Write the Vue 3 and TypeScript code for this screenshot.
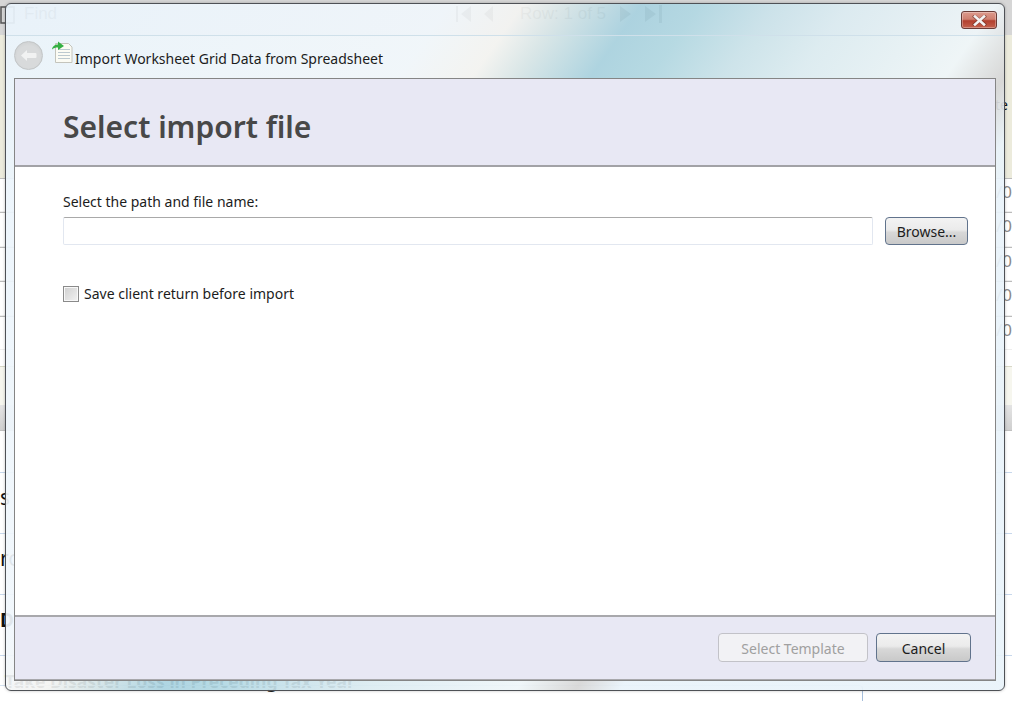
<script setup lang="ts">
const rows: string[] = ['/0', '/0', '/0', '/0', '/0']
const lowerRows: { text: string; strong: boolean }[] = [
  { text: 's', strong: false },
  { text: 'ro', strong: false },
  { text: 'D', strong: true },
]
</script>

<template>
  <div class="page">
    <div class="backdrop">
      <div class="bg-toolbar">
        <svg class="bg-tool-icon" width="16" height="20" viewBox="0 0 16 20"><rect x="1" y="3" width="13" height="16" fill="none" stroke="#555" stroke-width="1.5" /></svg>
        <span class="bg-find">Find</span>
        <svg class="bg-nav" width="46" height="20" viewBox="0 0 46 20" fill="#666">
          <rect x="1" y="2" width="2" height="16" />
          <path d="M16 2v16l-10-8zM38 2v16l-9-8z" />
        </svg>
        <span class="bg-row-count">Row: 1 of 5</span>
        <svg class="bg-nav-next" width="46" height="20" viewBox="0 0 46 20" fill="#555">
          <path d="M1 2v16l11-8zM26 2v16l11-8z" />
          <rect x="40" y="1" width="3" height="18" />
        </svg>
      </div>
      <div class="bg-banner"><span>te</span></div>
      <div class="bg-rows">
        <div v-for="(row, i) in rows" :key="i" class="bg-row">{{ row }}</div>
      </div>
      <div class="bg-summary"></div>
      <div class="bg-head"></div>
      <div class="bg-list">
        <div v-for="row in lowerRows" :key="row.text" class="bg-list-row" :class="{ strong: row.strong }">{{ row.text }}</div>
      </div>
      <div class="bg-section">
        <span class="bg-section-text">Take Disaster Loss in Preceding Tax Year</span>
      </div>
    </div>

    <section class="window">
      <div class="title-bar">
        <button class="close" type="button" aria-label="Close">
          <svg width="15" height="11" viewBox="0 0 15 11">
            <path d="M2.500 1.500L12.500 9.500M12.500 1.500L2.500 9.500" stroke="#5a2a22" stroke-width="3.6" stroke-linecap="square" opacity=".55" />
            <path d="M3 1.500L12 9.500M12 1.500L3 9.500" stroke="#f4f4f4" stroke-width="2.6" stroke-linecap="square" />
          </svg>
        </button>
      </div>
      <div class="nav-bar">
        <span class="back">
          <svg width="17" height="13" viewBox="0 0 17 13"><path d="M1 6.500L7 1v3h8.500a1 1 0 0 1 1 1v3a1 1 0 0 1-1 1H7v3z" fill="#f1f2f2" /></svg>
        </span>
        <svg class="doc-icon" width="23" height="23" viewBox="0 0 23 23">
          <path d="M4.500 3.500h13l3.500 3.500v15.500h-16.500z" fill="#fbfbf4" stroke="#c4c4bc" />
          <path d="M7 9.500h12M7 12.500h12M7 15.500h12M7 18.500h12" stroke="#bcc9d0" />
          <path d="M1 9.500c.5-3.500 3-5 6-5V1.500l6 4.500-6 4V7.500c-2.500 0-4.500.5-6 2z" fill="#35b043" />
        </svg>
        <span class="window-title">Import Worksheet Grid Data from Spreadsheet</span>
      </div>
      <div class="panel">
        <header class="panel-head">
          <h1>Select import file</h1>
        </header>
        <main class="panel-body">
          <label class="path-label" for="path">Select the path and file name:</label>
          <div class="path-row">
            <input id="path" class="path-input" type="text" />
            <button class="btn browse" type="button">Browse...</button>
          </div>
          <label class="save-row">
            <span class="check"></span>
            <span>Save client return before import</span>
          </label>
        </main>
        <footer class="panel-foot">
          <button class="btn template" type="button" disabled>Select Template</button>
          <button class="btn cancel" type="button">Cancel</button>
        </footer>
      </div>
    </section>
  </div>
</template>

<style>
html, body { margin: 0; background: #fff; }
</style>

<style scoped>
.page {
  position: relative;
  width: 1012px;
  height: 701px;
  overflow: hidden;
  background: #fff;
  font-family: "Noto Sans", "Open Sans", sans-serif;
  color: #1c1c1c;
}
.backdrop {
  display: flex;
  flex-direction: column;
  height: 701px;
}
.bg-toolbar {
  display: flex;
  align-items: center;
  height: 35px;
  flex: none;
  background: #d6d6d6;
  font-family: "Liberation Sans", sans-serif;
  font-size: 17px;
  color: #666;
  padding-bottom: 8px;
  box-sizing: border-box;
}
.bg-find { margin-left: 8px; }
.bg-nav { margin-left: 398px; }
.bg-row-count { margin-left: 19px; }
.bg-nav-next { margin-left: 13px; }
.bg-banner {
  height: 143px;
  flex: none;
  background: #ecebdc;
  display: flex;
  justify-content: flex-end;
  padding: 60px 4px 0 0;
  box-sizing: border-box;
  font-size: 14px;
  line-height: 20px;
  color: #111;
}
.bg-rows { flex: none; }
.bg-row {
  height: 34.4px;
  box-sizing: border-box;
  border-top: 1px solid #bcbcbc;
  border-bottom: 1px solid #eeeeee;
  text-align: right;
  font-size: 17px;
  line-height: 26px;
  color: #8a8a8a;
}
.bg-summary {
  flex: none;
  box-sizing: border-box;
  margin-top: 16px;
  height: 39px;
  border-top: 1px solid #d8d8c8;
  background: #f6f6ee;
}
.bg-head {
  height: 25px;
  flex: none;
  background: linear-gradient(#e4e4e4, #cfcfcf);
  border-bottom: 1px solid #c0c0c0;
}
.bg-list {
  flex: none;
  padding-top: 41px;
}
.bg-list-row {
  height: 61px;
  box-sizing: border-box;
  border-top: 1px solid #c8d8ec;
  font-size: 21px;
  line-height: 49px;
  color: #111;
}
.bg-list-row.strong {
  font-weight: 700;
  font-size: 19px;
  line-height: 50px;
}
.bg-section {
  flex: 1;
  position: relative;
  box-sizing: border-box;
  border-top: 1px solid #c8d8ec;
  padding: 14px 0 0 5px;
}
.bg-section::after {
  content: "";
  position: absolute;
  left: 0;
  top: 29px;
  width: 863px;
  height: 30px;
  box-sizing: border-box;
  border-top: 1px solid #d5e2f0;
  border-right: 1px solid #a6bedb;
  border-top-right-radius: 4px;
}
.bg-section-text {
  font-size: 17.500px;
  line-height: 22px;
  font-weight: 700;
  color: #222;
  white-space: nowrap;
}
.window {
  position: absolute;
  left: 5px;
  top: 3px;
  width: 1000px;
  height: 688px;
  box-sizing: border-box;
  display: flex;
  flex-direction: column;
  border: 1px solid #4e5156;
  border-radius: 6px;
  box-shadow: 0 0 3px rgba(0, 0, 0, .25);
  background: linear-gradient(125deg,
    #eaf4fcec 0%, #f1f7fcec 30%, #f4f4f2ec 35%, #d8e6e8ec 38%, #a9d2e0ec 43%, #b2d8e3ec 47%, #cbe3ebec 52%,
    #dcecf2ec 57%, #eff6f9ec 67%, #d6d6d6ec 71%, #e9f3faec 74%, #e9f3faec 100%);
}
.title-bar {
  height: 32px;
  flex: none;
  display: flex;
  justify-content: flex-end;
  align-items: flex-start;
  padding: 7px 7px 0 0;
  box-sizing: border-box;
  border-bottom: 1px solid #cfe0ea;
}
.close {
  width: 36px;
  height: 18px;
  padding: 0;
  display: flex;
  align-items: center;
  justify-content: center;
  box-sizing: border-box;
  border: 1px solid #6a3b36;
  border-radius: 3px;
  background: linear-gradient(#dc9a8c 0%, #cf8070 45%, #b2402e 55%, #c4614d 100%);
  box-shadow: inset 0 0 0 1px rgba(255, 255, 255, .3);
}
.nav-bar {
  height: 42px;
  flex: none;
  display: flex;
  align-items: flex-start;
  padding-left: 8px;
  box-sizing: border-box;
}
.back {
  width: 29px;
  height: 29px;
  margin-top: 5px;
  border-radius: 50%;
  box-sizing: border-box;
  border: 1px solid #c2c5c6;
  background: radial-gradient(circle at 50% 55%, #d8dadb 0 55%, #c6c9ca 100%);
  display: flex;
  align-items: center;
  justify-content: center;
}
.doc-icon { margin: 4px 0 0 8px; flex: none; }
.window-title {
  margin: 13px 0 0 1px;
  font-size: 14px;
  line-height: 20px;
  white-space: nowrap;
}
.panel {
  flex: 1;
  min-height: 0;
  margin: 0 8px 9px;
  display: flex;
  flex-direction: column;
  background: #fff;
  border: 1px solid #858585;
}
.panel-head {
  height: 88px;
  flex: none;
  box-sizing: border-box;
  display: flex;
  align-items: center;
  padding: 9px 0 0 48px;
  background: #e8e8f4;
  border-bottom: 2px solid #a2a2a6;
}
h1 {
  margin: 0;
  font-size: 30px;
  line-height: 44px;
  font-weight: 600;
  color: #484848;
}
.panel-body {
  flex: 1;
  min-height: 0;
  padding: 25px 27px 0 48px;
}
.path-label {
  display: block;
  font-size: 14px;
  line-height: 20px;
}
.path-row {
  display: flex;
  gap: 12px;
  margin-top: 5px;
}
.path-input {
  flex: 1;
  min-width: 0;
  height: 28px;
  box-sizing: border-box;
  border: 1px solid #e2e7f0;
  border-top-color: #a9a9a9;
  border-radius: 2px;
  background: #fff;
}
.btn {
  height: 28px;
  padding: 0;
  box-sizing: border-box;
  border: 1px solid #61738c;
  border-radius: 4px;
  font-family: inherit;
  font-size: 14px;
  color: #1c1c1c;
  background: linear-gradient(#f3f3f3 0%, #ebebeb 45%, #d8d8d8 55%, #c9c9c9 100%);
}
.browse { width: 83px; }
.save-row {
  display: flex;
  align-items: center;
  gap: 5px;
  margin-top: 41px;
  font-size: 14px;
  line-height: 16px;
}
.check {
  width: 16px;
  height: 16px;
  flex: none;
  box-sizing: border-box;
  border: 1px solid #8a8a8a;
  background: linear-gradient(135deg, #cfcfcf, #f2f2f2);
  box-shadow: inset 0 0 0 1px #f8f8f8;
}
.panel-foot {
  height: 65px;
  flex: none;
  box-sizing: border-box;
  display: flex;
  justify-content: flex-end;
  gap: 8px;
  padding: 16px 24px 0 0;
  background: #e8e8f4;
  border-top: 2px solid #a8a8ac;
  border-bottom: 1px solid #a8a8ac;
}
.template {
  width: 150px;
  height: 29px;
  padding-top: 1px;
  border-color: #c2c2c8;
  background: #f2f2f5;
  color: #a0a0a0;
}
.cancel {
  width: 95px;
  height: 29px;
  padding-top: 1px;
}
</style>
